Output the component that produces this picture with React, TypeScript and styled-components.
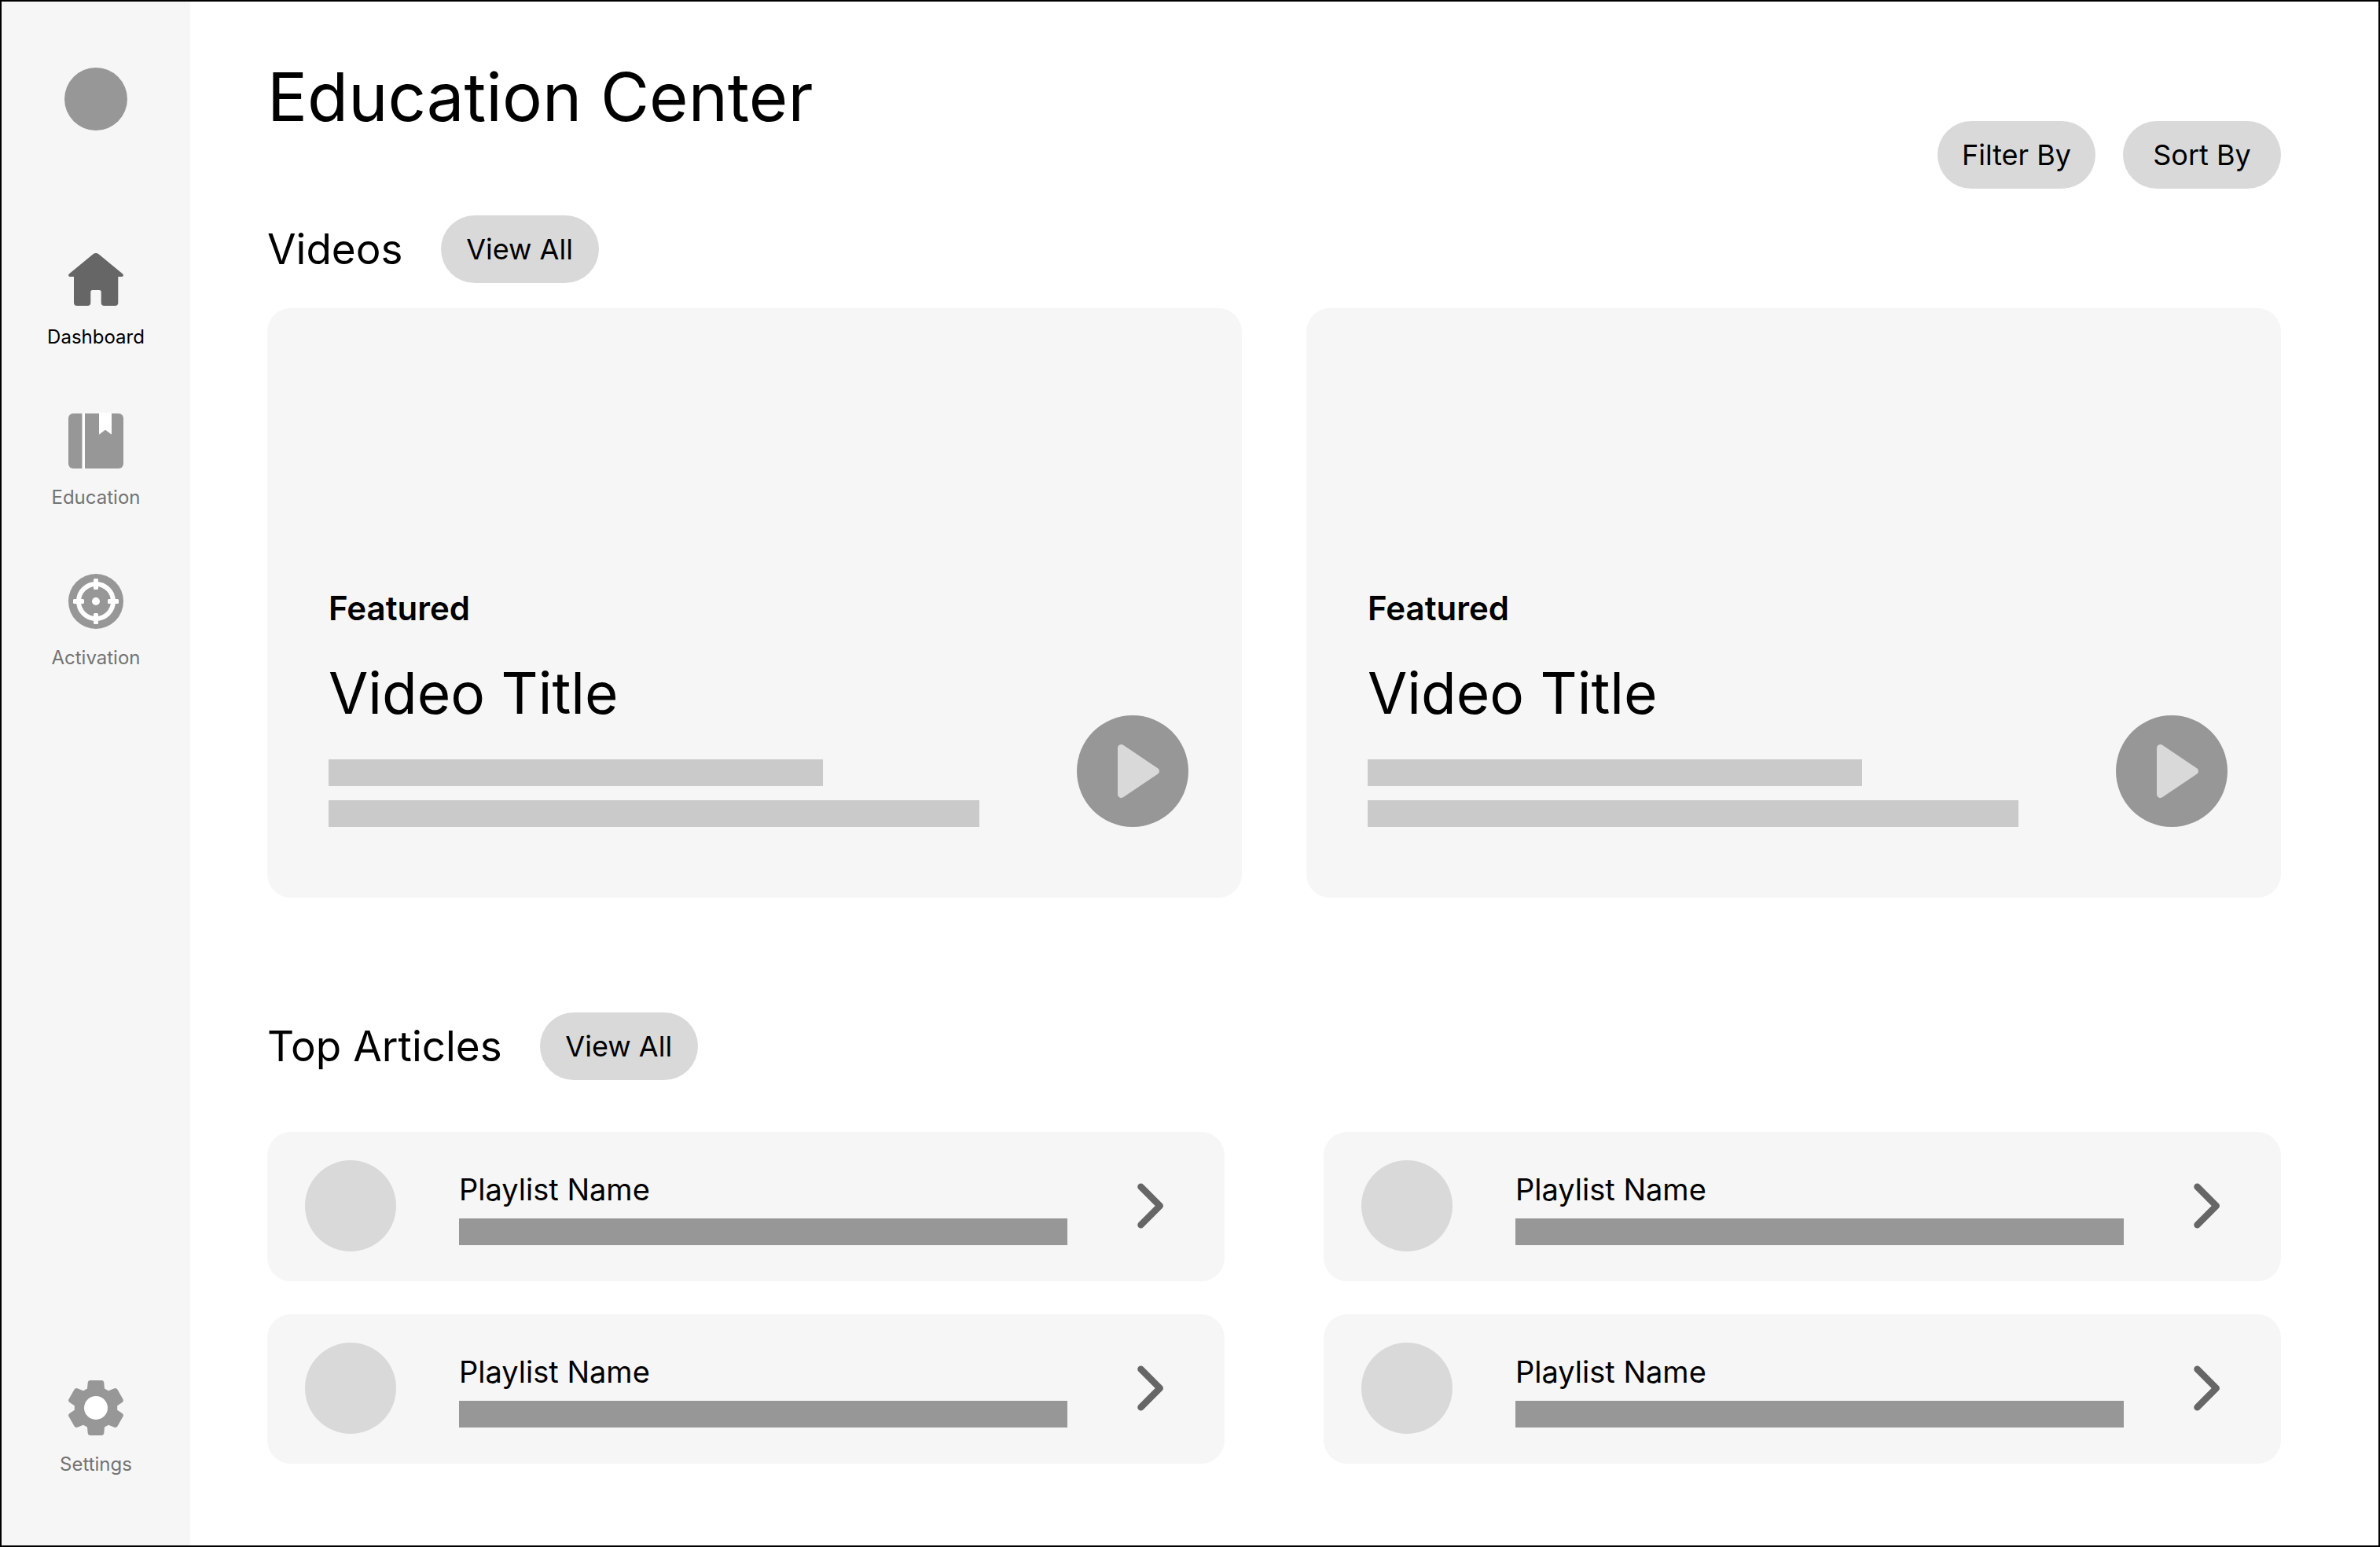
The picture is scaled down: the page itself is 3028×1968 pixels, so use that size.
import React from "react";
import styled, { createGlobalStyle } from "styled-components";

const GlobalStyle = createGlobalStyle`
  *, *::before, *::after { box-sizing: border-box; }
  body { margin: 0; }
  body, button { font-family: Inter, "Open Sans", sans-serif; color: #000; }
  h1, h2, h3, p, ul { margin: 0; padding: 0; font-weight: 400; }
  ul { list-style: none; }
  a { color: inherit; text-decoration: none; }
  svg { display: block; flex: none; }
`;

const Page = styled.div`
  display: flex;
  min-height: 100vh;
  border: 2px solid #000;
  background: #fff;
`;

const Sidebar = styled.aside`
  flex: none;
  width: 240px;
  padding: 84px 0 89px;
  display: flex;
  flex-direction: column;
  align-items: center;
  background: #f6f6f6;
`;

const Avatar = styled.div`
  width: 80px;
  height: 80px;
  border-radius: 50%;
  background: #979797;
`;

const Nav = styled.nav`
  flex: 1;
  margin-top: 156px;
  display: flex;
  flex-direction: column;
  gap: 83px;
`;

const NavItem = styled.a<{ $active?: boolean; $last?: boolean }>`
  display: flex;
  flex-direction: column;
  align-items: center;
  gap: 23px;
  margin-top: ${(p) => (p.$last ? "auto" : "0")};
  font-size: 24px;
  line-height: 28px;
  color: ${(p) => (p.$active ? "#000" : "#737373")};

  svg {
    color: ${(p) => (p.$active ? "#666" : "#979797")};
  }
`;

const Main = styled.main`
  flex: 1;
  min-width: 0;
  padding: 72px 124px 104px 98px;
`;

const Header = styled.header`
  display: flex;
  justify-content: space-between;
  align-items: flex-start;
`;

const Title = styled.h1`
  font-size: 85px;
  line-height: 100px;
`;

const Actions = styled.div`
  display: flex;
  gap: 35px;
  margin-top: 80px;
`;

const Pill = styled.button`
  width: 201px;
  height: 86px;
  padding: 0;
  border: 0;
  border-radius: 43px;
  background: #d9d9d9;
  font-size: 36px;
  line-height: 44px;
  cursor: pointer;
`;

const Section = styled.section<{ $space: number; $gap: number }>`
  margin-top: ${(p) => p.$space}px;
  display: flex;
  flex-direction: column;
  gap: ${(p) => p.$gap}px;
`;

const SectionHead = styled.div`
  display: flex;
  align-items: center;
  gap: 48px;
`;

const SectionTitle = styled.h2`
  font-size: 53px;
  line-height: 64px;
`;

const VideoGrid = styled.div`
  display: grid;
  grid-template-columns: 1fr 1fr;
  gap: 82px;
`;

const VideoCard = styled.article`
  min-height: 750px;
  padding: 68px 68px 90px 78px;
  display: flex;
  align-items: flex-end;
  gap: 124px;
  border-radius: 30px;
  background: #f6f6f6;
`;

const VideoBody = styled.div`
  flex: 1;
  min-width: 0;
`;

const Tag = styled.p`
  font-size: 42px;
  line-height: 48px;
  font-weight: 600;
`;

const VideoTitle = styled.h3`
  margin: 40px 0;
  font-size: 73px;
  line-height: 88px;
`;

const Lines = styled.div`
  display: grid;
  gap: 18px;
`;

const Bar = styled.div<{ $width?: string; $dark?: boolean }>`
  width: ${(p) => p.$width ?? "100%"};
  height: 34px;
  background: ${(p) => (p.$dark ? "#979797" : "#cacaca")};
`;

const PlayButton = styled.button`
  flex: none;
  width: 142px;
  height: 142px;
  padding: 0;
  border: 0;
  border-radius: 50%;
  background: #979797;
  cursor: pointer;
`;

const ArticleGrid = styled.ul`
  display: grid;
  grid-template-columns: 1fr 1fr;
  gap: 42px 126px;
`;

const ArticleCard = styled.a`
  display: flex;
  align-items: center;
  padding: 36px 77px 38px 48px;
  border-radius: 30px;
  background: #f6f6f6;
`;

const Thumb = styled.div`
  flex: none;
  width: 116px;
  height: 116px;
  border-radius: 50%;
  background: #d9d9d9;
`;

const ArticleBody = styled.div`
  flex: 1;
  min-width: 0;
  align-self: flex-end;
  margin: 0 89px 8px 80px;
  display: grid;
  gap: 15px;
`;

const ArticleName = styled.h3`
  font-size: 38px;
  line-height: 44px;
`;

const HomeIcon = () => (
  <svg width="70" height="70" viewBox="0 0 70 70" fill="currentColor" aria-hidden="true">
    <path d="M31.5 1.2Q35-1.2 38.5 1.2L69.2 26.6Q71 29.5 68 30H63.3V63a4 4 0 0 1-4 4H45.7a4 4 0 0 1-4-4V49.5a2.5 2.5 0 0 0-2.5-2.5H30.8a2.5 2.5 0 0 0-2.5 2.5V63a4 4 0 0 1-4 4H11a4 4 0 0 1-4-4V30H2Q-1 29.5 .8 26.6Z" />
  </svg>
);

const BookIcon = () => (
  <svg width="70" height="70" viewBox="0 0 70 70" overflow="visible" aria-hidden="true">
    <rect width="70" height="70" rx="6" fill="currentColor" />
    <rect x="17.5" width="3.5" height="70" fill="#fff" />
    <path d="M39-1H55V25.5Q55 27 53.8 26L47 20.8L40.2 26Q39 27 39 25.5Z" fill="#fff" />
  </svg>
);

const TargetIcon = () => (
  <svg width="70" height="70" viewBox="0 0 70 70" aria-hidden="true">
    <circle cx="35" cy="35" r="35" fill="currentColor" />
    <circle cx="35" cy="35" r="22" fill="none" stroke="#fff" strokeWidth="6" />
    <g fill="#fff">
      <circle cx="35" cy="35" r="5" />
      <rect x="32" y="6" width="6" height="14" rx="1.5" />
      <rect x="32" y="50" width="6" height="14" rx="1.5" />
      <rect x="6" y="32" width="14" height="6" rx="1.5" />
      <rect x="50" y="32" width="14" height="6" rx="1.5" />
    </g>
  </svg>
);

const GearIcon = () => (
  <svg width="70" height="70" viewBox="0 0 70 70" aria-hidden="true">
    <path
      fill="currentColor"
      d="M28 0H42Q45 0 45.3 3L46 10.5L51 13.3L58.5 10.3Q61 9.3 62.5 11.8L69.5 24Q70.8 26.3 68.5 28L62.2 32.3V37.7L68.5 42Q70.8 43.7 69.5 46L62.5 58.2Q61 60.7 58.5 59.7L51 56.7L46 59.5L45.3 67Q45 70 42 70H28Q25 70 24.7 67L24 59.5L19 56.7L11.5 59.7Q9 60.7 7.5 58.2L.5 46Q-.8 43.7 1.5 42L7.8 37.7V32.3L1.5 28Q-.8 26.3 .5 24L7.5 11.8Q9 9.3 11.5 10.3L19 13.3L24 10.5L24.7 3Q25 0 28 0Z"
    />
    <circle cx="35" cy="35" r="15" fill="#fff" />
  </svg>
);

const PlayIcon = () => (
  <svg width="142" height="142" viewBox="0 0 142 142" aria-hidden="true">
    <path
      fill="#d9d9d9"
      d="M52 41.5a4.5 4.5 0 0 1 7-3.7L103.2 67.5a4.3 4.3 0 0 1 0 7L59 104.2a4.5 4.5 0 0 1-7-3.7Z"
    />
  </svg>
);

const ChevronIcon = () => (
  <svg width="34" height="58" viewBox="0 0 34 58" fill="none" aria-hidden="true">
    <path
      d="M4.5 4.8L28.7 29L4.5 53.2"
      stroke="#666"
      strokeWidth="8.5"
      strokeLinecap="round"
      strokeLinejoin="round"
    />
  </svg>
);

const videos = ["Video Title", "Video Title"];
const articles = ["Playlist Name", "Playlist Name", "Playlist Name", "Playlist Name"];

export default function App() {
  return (
    <>
      <GlobalStyle />
      <Page>
        <Sidebar>
          <Avatar />
          <Nav>
            <NavItem href="#dashboard" $active aria-current="page">
              <HomeIcon />
              Dashboard
            </NavItem>
            <NavItem href="#education">
              <BookIcon />
              Education
            </NavItem>
            <NavItem href="#activation">
              <TargetIcon />
              Activation
            </NavItem>
            <NavItem href="#settings" $last>
              <GearIcon />
              Settings
            </NavItem>
          </Nav>
        </Sidebar>

        <Main>
          <Header>
            <Title>Education Center</Title>
            <Actions>
              <Pill type="button">Filter By</Pill>
              <Pill type="button">Sort By</Pill>
            </Actions>
          </Header>

          <Section $space={34} $gap={32}>
            <SectionHead>
              <SectionTitle>Videos</SectionTitle>
              <Pill type="button">View All</Pill>
            </SectionHead>
            <VideoGrid>
              {videos.map((title, i) => (
                <VideoCard key={i}>
                  <VideoBody>
                    <Tag>Featured</Tag>
                    <VideoTitle>{title}</VideoTitle>
                    <Lines>
                      <Bar $width="76%" />
                      <Bar />
                    </Lines>
                  </VideoBody>
                  <PlayButton type="button" aria-label="Play video">
                    <PlayIcon />
                  </PlayButton>
                </VideoCard>
              ))}
            </VideoGrid>
          </Section>

          <Section $space={146} $gap={66}>
            <SectionHead>
              <SectionTitle>Top Articles</SectionTitle>
              <Pill type="button">View All</Pill>
            </SectionHead>
            <ArticleGrid>
              {articles.map((name, i) => (
                <li key={i}>
                  <ArticleCard href="#article">
                    <Thumb />
                    <ArticleBody>
                      <ArticleName>{name}</ArticleName>
                      <Bar $dark />
                    </ArticleBody>
                    <ChevronIcon />
                  </ArticleCard>
                </li>
              ))}
            </ArticleGrid>
          </Section>
        </Main>
      </Page>
    </>
  );
}
